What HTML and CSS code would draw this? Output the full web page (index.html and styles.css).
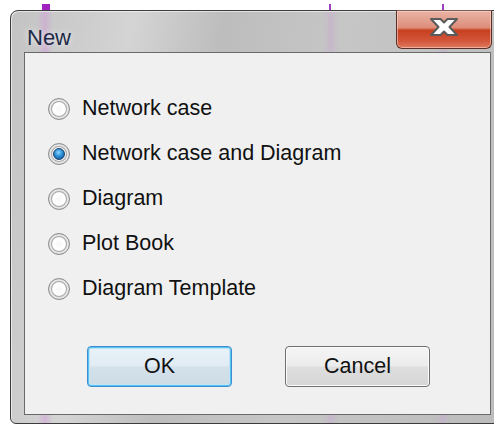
FILE: index.html
```html
<!DOCTYPE html>
<html lang="en">
<head>
<meta charset="utf-8">
<title>New</title>
<link rel="stylesheet" href="styles.css">
</head>
<body>
  <div class="window">
    <div class="titlebar">
      <span class="title">New</span>
      <button class="close" type="button" aria-label="Close">
        <svg class="close-glyph" width="32" height="22" viewBox="0 0 32 22">
          <polygon points="3,3 12.5,3 16,6.5 19.5,3 29,3 21.5,11 29,19 19.5,19 16,15.5 12.5,19 3,19 10.5,11" fill="#ffffff" stroke="#5a5a5a" stroke-width="2" stroke-linejoin="round"/>
        </svg>
      </button>
    </div>
    <div class="client">
      <form class="options">
        <label class="option"><input type="radio" name="kind"><span class="radio"></span>Network case</label>
        <label class="option"><input type="radio" name="kind" checked><span class="radio"></span>Network case and Diagram</label>
        <label class="option"><input type="radio" name="kind"><span class="radio"></span>Diagram</label>
        <label class="option"><input type="radio" name="kind"><span class="radio"></span>Plot Book</label>
        <label class="option"><input type="radio" name="kind"><span class="radio"></span>Diagram Template</label>
      </form>
      <div class="actions">
        <button class="btn btn-default" type="button">OK</button>
        <button class="btn" type="button">Cancel</button>
      </div>
    </div>
  </div>
</body>
</html>
```

FILE: styles.css
```css
html, body {
  margin: 0;
  padding: 0;
}

body {
  width: 494px;
  height: 425px;
  overflow: hidden;
  background:
    linear-gradient(90deg, transparent 42px, #a020c0 42px, #a020c0 50px, transparent 50px) 0 4px / 100% 6px no-repeat,
    linear-gradient(90deg, transparent 329px, #a040c0 329px, #a040c0 331px, transparent 331px) 0 4px / 100% 6px no-repeat,
    linear-gradient(90deg, transparent 442px, #a040c0 442px, #a040c0 444px, transparent 444px) 0 4px / 100% 6px no-repeat,
    #ffffff;
  font-family: "Liberation Sans", Arial, sans-serif;
}

/* Aero-style glass frame */
.window {
  box-sizing: border-box;
  margin: 10px 0 0 10px;
  width: 493px;
  height: 414px;
  border: 1px solid #3c3c3c;
  border-radius: 8px 8px 0 6px;
  display: flex;
  flex-direction: column;
  background:
    linear-gradient(90deg, transparent 26px, rgba(210, 150, 220, 0.45) 34px, transparent 42px),
    linear-gradient(90deg, transparent 312px, rgba(200, 160, 210, 0.35) 320px, transparent 328px),
    linear-gradient(90deg, transparent 424px, rgba(200, 160, 210, 0.35) 432px, transparent 440px),
    linear-gradient(100deg, #c3c3c3 0%, #d4d4d4 22%, #bdbdbd 38%, #c6c6c6 60%, #bcbcbc 100%);
  box-shadow: inset 1px 1px 0 rgba(255, 255, 255, 0.55);
}

.titlebar {
  height: 41px;
  flex: none;
  display: flex;
  align-items: flex-start;
}

.title {
  margin: 14px 0 0 16px;
  font-size: 22px;
  line-height: 26px;
  color: #1c2b47;
  text-shadow: 0 0 6px rgba(255, 255, 255, 0.8);
}

.close {
  margin: -1px 10px 0 auto;
  width: 96px;
  height: 39px;
  padding: 0;
  border: 1px solid #5c3026;
  border-top-color: #7a5a52;
  border-radius: 0 0 6px 6px;
  background: linear-gradient(180deg, #e9b3a4 0%, #dd8e7a 45%, #c8401f 52%, #d2553a 80%, #e07a5e 100%);
  box-shadow: inset 0 0 0 1px rgba(255, 220, 210, 0.55);
  display: flex;
  align-items: center;
  justify-content: center;
}

.close-glyph {
  display: block;
  margin-top: -5px;
}

.client {
  box-sizing: border-box;
  height: 363px;
  margin-left: 13px;
  width: 467px;
  flex: none;
  border: 1px solid #6a6a6a;
  background: #f0f0f0;
  display: flex;
  flex-direction: column;
  padding-top: 33px;
}

.options {
  margin: 0;
  display: flex;
  flex-direction: column;
}

.option {
  height: 45px;
  display: flex;
  align-items: center;
  gap: 12px;
  padding-left: 23px;
  font-size: 21.5px;
  color: #111111;
}

.option input {
  position: absolute;
  opacity: 0;
  pointer-events: none;
}

.radio {
  box-sizing: border-box;
  width: 22px;
  height: 22px;
  flex: none;
  border-radius: 50%;
  border: 1px solid #8e8e8e;
  background: radial-gradient(circle at 50% 50%, #f6f6f6 0, #ffffff 40%, #d7d7d7 75%, #ececec 100%);
  box-shadow: inset 0 0 0 2px #e6e6e6, inset 0 0 0 3px #a8a8a8;
  display: flex;
  align-items: center;
  justify-content: center;
}

.option input:checked + .radio::after {
  content: "";
  width: 10px;
  height: 10px;
  border-radius: 50%;
  border: 1px solid #1b3f66;
  background: radial-gradient(circle at 45% 35%, #8fd6ff 0, #2a8ed6 45%, #0b4c8c 100%);
}

.actions {
  display: flex;
  gap: 53px;
  padding-left: 62px;
  margin-top: 35px;
}

.btn {
  box-sizing: border-box;
  width: 145px;
  height: 41px;
  padding: 0;
  border: 1px solid #707070;
  border-radius: 4px;
  background: linear-gradient(180deg, #f5f5f5 0%, #ececec 48%, #dedede 52%, #d6d6d6 100%);
  box-shadow: inset 0 0 0 1px #fbfbfb;
  font-family: "Liberation Sans", Arial, sans-serif;
  font-size: 21.5px;
  color: #111111;
}

.btn-default {
  border-color: #3c8ed0;
  background: linear-gradient(180deg, #e8f2f9 0%, #e0ebf3 48%, #d3e1ea 52%, #cddbe5 100%);
  box-shadow: inset 0 0 0 1px #5ac2f0, inset 0 0 0 2px #bfe4f7;
}
```
